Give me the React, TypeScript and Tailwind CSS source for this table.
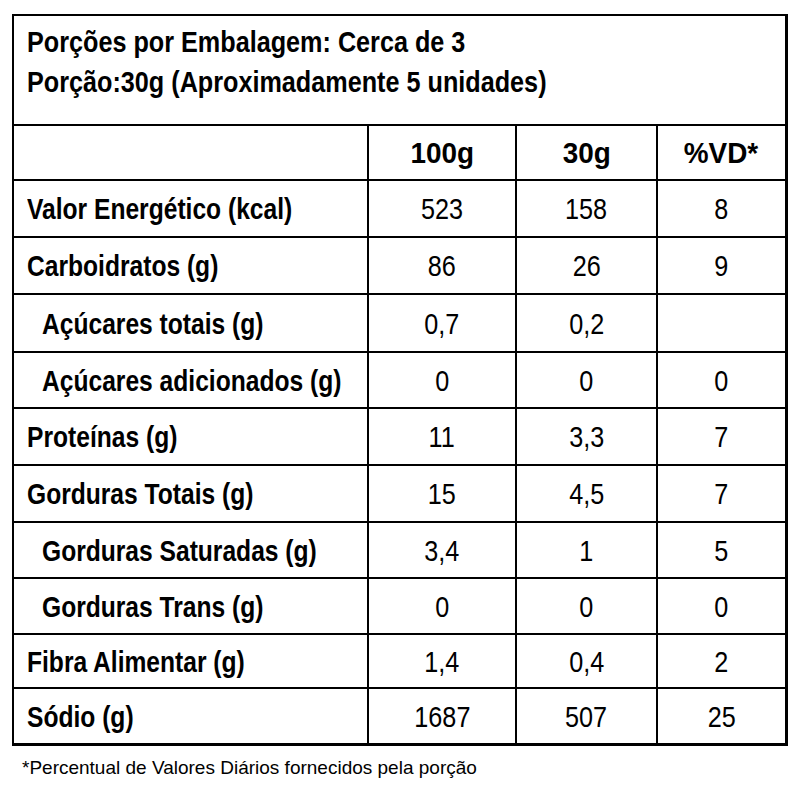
const rows = [
  { label: 'Valor Energético (kcal)', a: '523', b: '158', c: '8', sub: false, h: 'h-[57px]' },
  { label: 'Carboidratos (g)', a: '86', b: '26', c: '9', sub: false, h: 'h-[57px]' },
  { label: 'Açúcares totais (g)', a: '0,7', b: '0,2', c: '', sub: true, h: 'h-[58px]' },
  { label: 'Açúcares adicionados (g)', a: '0', b: '0', c: '0', sub: true, h: 'h-[56px]' },
  { label: 'Proteínas (g)', a: '11', b: '3,3', c: '7', sub: false, h: 'h-[57px]' },
  { label: 'Gorduras Totais (g)', a: '15', b: '4,5', c: '7', sub: false, h: 'h-[57px]' },
  { label: 'Gorduras Saturadas (g)', a: '3,4', b: '1', c: '5', sub: true, h: 'h-[56px]' },
  { label: 'Gorduras Trans (g)', a: '0', b: '0', c: '0', sub: true, h: 'h-[56px]' },
  { label: 'Fibra Alimentar (g)', a: '1,4', b: '0,4', c: '2', sub: false, h: 'h-[54px]' },
  { label: 'Sódio (g)', a: '1687', b: '507', c: '25', sub: false, h: 'h-[56px]' },
];

const sans = { fontFamily: '"Liberation Sans", Arial, sans-serif' };

function Num({ v }: { v: string }) {
  return <span className="inline-block scale-x-[0.84]">{v}</span>;
}

export default function App() {
  return (
    <div className="w-[800px] h-[800px] bg-white text-black pt-[14px] pl-[12px]" style={sans}>
      <div className="w-[776px] border-2 border-black border-r-[3px] border-b-[3px]">
        <div className="h-[108px] pl-[13px] pt-[6px] text-[30px] font-bold leading-[40px]">
          <div className="origin-left scale-x-[0.84]">Porções por Embalagem: Cerca de 3</div>
          <div className="origin-left scale-x-[0.84]">Porção:30g (Aproximadamente 5 unidades)</div>
        </div>
        <div className="grid grid-cols-[355px_148px_141px_127px] border-t-2 border-black text-[30px]">
          <div className="h-[53px] border-r-2 border-black" />
          <div className="h-[53px] border-r-2 border-black flex items-center justify-center font-bold">
            <span className="inline-block scale-x-[0.93]">100g</span>
          </div>
          <div className="h-[53px] border-r-2 border-black flex items-center justify-center font-bold">
            <span className="inline-block scale-x-[0.93]">30g</span>
          </div>
          <div className="h-[53px] flex items-center justify-center font-bold">
            <span className="inline-block scale-x-[0.93]">%VD*</span>
          </div>
          {rows.map((r) => (
            <div key={r.label} className="contents">
              <div className={`${r.h} border-t-2 border-r-2 border-black flex items-center font-bold ${r.sub ? 'pl-[28px]' : 'pl-[13px]'}`}>
                <span className="inline-block origin-left scale-x-[0.82] whitespace-nowrap">{r.label}</span>
              </div>
              <div className={`${r.h} border-t-2 border-r-2 border-black flex items-center justify-center`}>
                <Num v={r.a} />
              </div>
              <div className={`${r.h} border-t-2 border-r-2 border-black flex items-center justify-center`}>
                <Num v={r.b} />
              </div>
              <div className={`${r.h} border-t-2 border-black flex items-center justify-center`}>
                <Num v={r.c} />
              </div>
            </div>
          ))}
        </div>
      </div>
      <p className="pl-[10px] mt-[9px] text-[19px] leading-[26px]">
        *Percentual de Valores Diários fornecidos pela porção
      </p>
    </div>
  );
}
